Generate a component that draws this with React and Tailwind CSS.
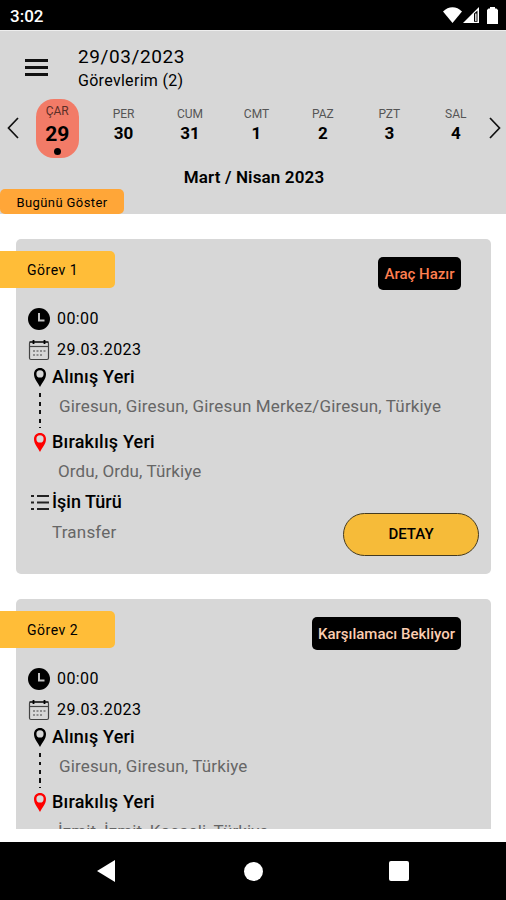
import { useState } from 'react';
import clsx from 'clsx';

const DAYS = [
  { name: 'ÇAR', number: 29 },
  { name: 'PER', number: 30 },
  { name: 'CUM', number: 31 },
  { name: 'CMT', number: 1 },
  { name: 'PAZ', number: 2 },
  { name: 'PZT', number: 3 },
  { name: 'SAL', number: 4 },
];

const TASKS = [
  {
    id: 1,
    status: 'Araç Hazır',
    statusClass: 'w-[83px] text-[#ff7f50]',
    time: '00:00',
    date: '29.03.2023',
    pickup: 'Giresun, Giresun, Giresun Merkez/Giresun, Türkiye',
    dropoff: 'Ordu, Ordu, Türkiye',
    type: 'Transfer',
  },
  {
    id: 2,
    status: 'Karşılamacı Bekliyor',
    statusClass: 'w-[149px] text-[#fbceb1]',
    time: '00:00',
    date: '29.03.2023',
    pickup: 'Giresun, Giresun, Türkiye',
    dropoff: 'İzmit, İzmit, Kocaeli, Türkiye',
  },
];

const Pin = ({ className }) => (
  <svg viewBox="0 0 12 19" className={clsx('h-[19px] w-3 shrink-0', className)} fill="currentColor">
    <path
      fillRule="evenodd"
      d="M6 0C2.400 0 0 2.600 0 6c0 5 3.500 8 6 13 2.500-5 6-8 6-13 0-3.400-2.400-6-6-6Zm0 2.300a3.600 3.600 0 1 1 0 7.200 3.600 3.600 0 0 1 0-7.200Z"
    />
  </svg>
);

const ClockIcon = () => (
  <svg viewBox="0 0 22 22" className="size-[22px] shrink-0">
    <circle cx="11" cy="11" r="11" fill="#000" />
    <path d="M11 5v7.500h5.500" fill="none" stroke="#c4c4c4" strokeWidth="2" />
  </svg>
);

const CalendarIcon = () => (
  <svg viewBox="0 0 22 22" className="size-[22px] shrink-0" fill="none" stroke="#444">
    <rect x="1.500" y="3" width="19" height="17.500" rx="1.500" strokeWidth="1.200" />
    <path d="M1.500 7.500h19" strokeWidth="1.200" />
    <path d="M1.500 3h19" stroke="#222" strokeWidth="1.600" />
    <path d="M5.500 1v4M16.500 1v4" stroke="#000" strokeWidth="1.800" />
    <path d="M5 12h12.500M5 16h9.500" strokeWidth="1.200" strokeDasharray="2 1.500" />
  </svg>
);

const ListIcon = () => (
  <svg viewBox="0 0 18 17" className="h-[17px] w-[18px] shrink-0" stroke="#222" strokeWidth="2.200">
    <path d="M0 2h3M0 8.500h3M0 15h3M6 2h12M6 8.500h12M6 15h12" />
  </svg>
);

const StatusBar = () => (
  <div className="flex h-[30px] shrink-0 items-center justify-between bg-black pl-[10px] pr-[8px] text-white">
    <span className="pt-[3px] text-[17px] font-medium">3:02</span>
    <div className="flex items-center">
      <svg viewBox="0 0 19 16" className="h-4 w-[19px]" fill="currentColor">
        <path d="M9.500 16 0 4.500C5.500-1.200 13.500-1.200 19 4.500Z" />
      </svg>
      <svg viewBox="0 0 16 16" className="ml-px h-4 w-4" fill="currentColor">
        <path fillRule="evenodd" d="M0 16 16 0v16Zm11-9.500V14.800h3.500V3.500Z" />
        <path d="M12.200 6.500h1.300v7.500h-1.300Z" />
      </svg>
      <svg viewBox="0 0 11 17" className="ml-[8px] h-[17px] w-[11px]" fill="currentColor">
        <path d="M3 0h5v1.500h1.500L11 3v14H0V3l1.500-1.500H3Z" />
      </svg>
    </div>
  </div>
);

const DayStrip = ({ selected, onSelect }) => (
  <div className="flex h-[62px] items-start">
    <button className="flex h-[60px] w-6 shrink-0 items-center pl-[7px]" aria-label="Önceki">
      <svg viewBox="0 0 12 22" className="h-[22px] w-3" fill="none" stroke="#111" strokeWidth="1.700">
        <path d="M11 1 1.500 11 11 21" />
      </svg>
    </button>
    <div className="grid w-[465px] shrink-0 grid-cols-7">
      {DAYS.map((day, index) => {
        const active = index === selected;
        return (
          <button key={day.name} onClick={() => onSelect(index)} className="flex justify-center pt-[1px]">
            <span
              className={clsx(
                'flex h-[59px] w-[43px] flex-col items-center',
                active ? 'rounded-[18px] bg-[#f27b67] pt-[4px]' : 'pt-[7px]'
              )}
            >
              <span className={clsx('text-xs leading-4', active ? 'text-[#5c2f28]' : 'text-[#555]')}>
                {day.name}
              </span>
              <span
                className={clsx(
                  'font-bold text-black',
                  active ? 'mt-[3px] text-[21px] leading-6' : 'text-[17px] leading-[22px]'
                )}
              >
                {day.number}
              </span>
              {active && <span className="mt-[2px] size-[7px] rounded-full bg-black" />}
            </span>
          </button>
        );
      })}
    </div>
    <button className="flex h-[60px] items-center" aria-label="Sonraki">
      <svg viewBox="0 0 12 22" className="h-[22px] w-3" fill="none" stroke="#111" strokeWidth="1.700">
        <path d="M1 1 10.500 11 1 21" />
      </svg>
    </button>
  </div>
);

const Header = () => {
  const [selected, setSelected] = useState(0);

  return (
    <header className="flex h-[184px] shrink-0 flex-col border-t border-[#eee] bg-[#d7d7d7]">
      <div className="flex h-[68px] items-center">
        <button className="ml-[25px] mt-[5px] flex w-[23px] flex-col gap-[4px]" aria-label="Menü">
          <span className="h-[3px] bg-[#111]" />
          <span className="h-[3px] bg-[#111]" />
          <span className="h-[3px] bg-[#111]" />
        </button>
        <div className="ml-[30px] pt-[9px] text-black">
          <h1 className="text-[19px] leading-6 tracking-[0.6px]">29/03/2023</h1>
          <p className="text-base leading-6 tracking-[0.3px]">Görevlerim (2)</p>
        </div>
      </div>
      <DayStrip selected={selected} onSelect={setSelected} />
      <div className="mt-[6px] pl-[2px] text-center text-[17px] leading-6 font-semibold tracking-[0.15px] text-black">
        Mart / Nisan 2023
      </div>
      <button className="mt-auto h-[25px] w-[124px] rounded-[5px] bg-[#ffa638] pt-[2px] text-[13px] tracking-[0.4px] text-black">
        Bugünü Göster
      </button>
    </header>
  );
};

const TaskCard = ({ task }) => (
  <section className="mr-[15px] ml-4 h-[335px] shrink-0 rounded-[5px] bg-[#d7d7d7]">
    <div className="flex items-start justify-between pt-[12px] pr-[30px]">
      <div className="-ml-4 flex h-[37px] w-[115px] items-center rounded-r-[5px] bg-[#ffbd38] pl-[27px] text-sm tracking-[0.5px] text-black">
        Görev {task.id}
      </div>
      <div
        className={clsx(
          'mt-[6px] flex h-[33px] items-center justify-center rounded-[5px] bg-black pt-px text-[15px] font-medium whitespace-nowrap',
          task.statusClass
        )}
      >
        {task.status}
      </div>
    </div>

    <div className="flex flex-col pl-3 text-black">
      <div className="mt-[15px] flex h-[28px] items-center gap-[7px] text-base tracking-[0.4px]">
        <ClockIcon />
        {task.time}
      </div>
      <div className="mt-[2px] flex h-[29px] items-center gap-[7px] text-base tracking-[0.4px]">
        <CalendarIcon />
        {task.date}
      </div>

      <div className="-mt-px flex h-[28px] items-center gap-[6px] pl-[6px] text-lg font-medium tracking-[0.2px]">
        <Pin />
        Alınış Yeri
      </div>
      <div className="flex h-[37px] pl-[11px]">
        <div className="mt-[2px] h-[35px] w-[2px] bg-[repeating-linear-gradient(to_bottom,#111_0px,#111_4px,transparent_4px,transparent_8.500px)]" />
        <p className="ml-[18px] text-[17px] leading-[30px] tracking-[0.15px] text-[#666]">{task.pickup}</p>
      </div>
      <div className="flex h-[28px] items-center gap-[6px] pl-[6px] text-lg font-medium tracking-[0.2px]">
        <Pin className="text-[#ff0000]" />
        Bırakılış Yeri
      </div>
      <p className="pl-[30px] text-[17px] leading-[30px] tracking-[0.1px] text-[#666]">{task.dropoff}</p>

      {task.type && (
        <>
          <div className="flex h-[32px] items-center gap-[3px] pl-[3px] text-lg font-medium">
            <ListIcon />
            İşin Türü
          </div>
          <div className="flex justify-between pr-[12px] pl-6">
            <p className="-mt-px text-[17px] leading-[30px] tracking-[0.2px] text-[#666]">{task.type}</p>
            <button className="-mt-[5px] h-[43px] w-[136px] rounded-full border border-[#443a20] bg-[#f6bb39] text-[15px] font-medium">
              DETAY
            </button>
          </div>
        </>
      )}
    </div>
  </section>
);

const NavigationBar = () => (
  <nav className="flex h-[58px] shrink-0 items-center bg-black pl-[97px] text-white">
    <svg viewBox="0 0 18 22" className="h-[22px] w-[18px]" fill="currentColor">
      <path d="M18 0v22L0 11Z" />
    </svg>
    <span className="ml-[129px] size-[19px] rounded-full bg-white" />
    <span className="ml-[126px] size-5 rounded-[2px] bg-white" />
  </nav>
);

export default function App() {
  return (
    <div className="flex h-[900px] w-[506px] flex-col overflow-hidden bg-white font-['Roboto','Liberation_Sans',sans-serif]">
      <StatusBar />
      <Header />
      <main className="mb-[13px] flex h-[615px] shrink-0 flex-col gap-[25px] overflow-hidden pt-[25px]">
        {TASKS.map((task) => (
          <TaskCard key={task.id} task={task} />
        ))}
      </main>
      <NavigationBar />
    </div>
  );
}
